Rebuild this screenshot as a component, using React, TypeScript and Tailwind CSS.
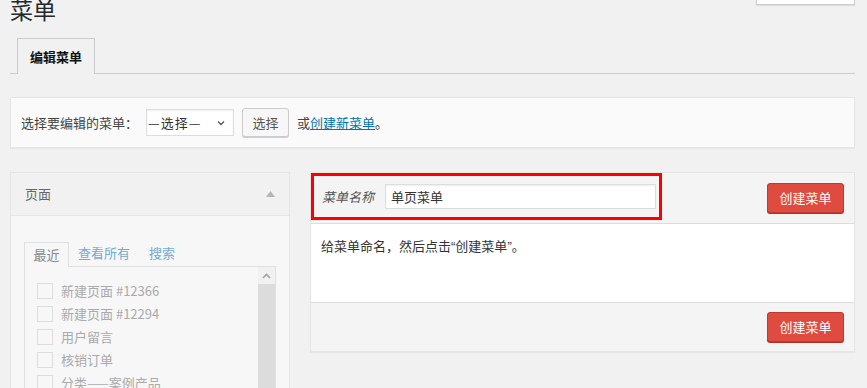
import React from "react";

const FONT = { fontFamily: '"Noto Sans CJK SC", "Noto Sans", sans-serif' };

const recent = [
  "新建页面 #12366",
  "新建页面 #12294",
  "用户留言",
  "核销订单",
  "分类——案例产品",
];

function CreateButton() {
  return (
    <button className="h-[30px] w-[77px] rounded-[3px] border border-[#c0392b] bg-[#e04b3f] text-[13px] text-white shadow-[0_1px_0_#b03228]">
      创建菜单
    </button>
  );
}

export default function App() {
  return (
    <div
      style={FONT}
      className="h-[388px] overflow-hidden bg-[#f1f1f1] pl-[10px] pr-[12px] text-[13px] text-[#444]"
    >
      {/* title + screen options */}
      <div className="flex items-start justify-between">
        <h1 className="-mt-[6px] text-[23px] leading-[30px] text-[#23282d]">菜单</h1>
        <div className="h-[5px] w-[99px] border-x border-b border-[#ccc] bg-white shadow-[0_1px_1px_rgba(0,0,0,0.08)]" />
      </div>

      {/* tabs */}
      <div className="mt-[14px] flex border-b border-[#ccc] pl-[7px]">
        <div className="-mb-px flex h-[36px] w-[78px] items-center justify-center border border-b-0 border-[#ccc] bg-[#f1f1f1] text-[13px] font-bold text-[#111]">
          编辑菜单
        </div>
      </div>

      {/* select bar */}
      <div className="mt-[23px] flex h-[51px] items-center border border-[#e5e5e5] bg-[#fafafa] pl-[10px] shadow-[0_1px_1px_rgba(0,0,0,0.04)]">
        <span className="text-[#444]">选择要编辑的菜单：</span>
        <div className="ml-[8px] flex h-[27px] w-[88px] items-center justify-between border border-[#ddd] bg-white pl-[1px] pr-[8px] shadow-[inset_0_1px_2px_rgba(0,0,0,0.07)]">
          <span className="tracking-[1px] text-[#333]">—选择—</span>
          <svg width="8" height="6" viewBox="0 0 8 6" fill="none" stroke="#555" strokeWidth="1.3">
            <path d="M1 1.5 L4 4.5 L7 1.5" />
          </svg>
        </div>
        <button className="ml-[8px] h-[29px] w-[47px] rounded-[3px] border border-[#ccc] bg-[#f7f7f7] text-[#555] shadow-[0_1px_0_#ccc]">
          选择
        </button>
        <span className="ml-[8px] text-[#444]">
          或<span className="text-[#0073aa] underline">创建新菜单</span>。
        </span>
      </div>

      {/* columns */}
      <div className="mt-[24px] flex gap-[20px]">
        {/* left: pages */}
        <div className="w-[280px] shrink-0 border border-[#e5e5e5] bg-[#f7f7f7]">
          <div className="flex h-[43px] items-center justify-between border-b border-[#e5e5e5] bg-[#f1f1f1] pl-[14px] pr-[14px]">
            <span className="text-[#666]">页面</span>
            <svg width="9" height="6" viewBox="0 0 9 6">
              <path d="M0 6 L4.5 0 L9 6 Z" fill="#b4b4b4" />
            </svg>
          </div>
          <div className="px-[13px] pt-[26px]">
            <div className="flex items-end text-[13px]">
              <div className="-mb-px flex h-[25px] w-[45px] items-center justify-center border border-b-0 border-[#e0e0e0] bg-[#f7f7f7] text-[#888]">
                最近
              </div>
              <span className="ml-[9px] pb-[4px] text-[#72aad3]">查看所有</span>
              <span className="ml-[19px] pb-[4px] text-[#72aad3]">搜索</span>
            </div>
            <div className="flex h-[140px] border border-[#e0e0e0] bg-[#f7f7f7]">
              <div className="flex-1 pl-[12px] pt-[16px]">
                {recent.map((t) => (
                  <div key={t} className="flex h-[23px] items-start gap-[8px]">
                    <span className="h-[16px] w-[16px] border border-[#ddd] bg-[#f7f7f7]" />
                    <span className="-mt-[2px] text-[#aaa]">{t}</span>
                  </div>
                ))}
              </div>
              <div className="flex w-[17px] flex-col">
                <div className="flex h-[17px] items-center justify-center bg-[#f1f1f1]">
                  <svg width="9" height="6" viewBox="0 0 9 6" fill="none" stroke="#a3a3a3" strokeWidth="1.6">
                    <path d="M1 5 L4.5 1.5 L8 5" />
                  </svg>
                </div>
                <div className="flex-1 bg-[#dcdcdc]" />
              </div>
            </div>
          </div>
        </div>

        {/* right: menu editor */}
        <div className="flex h-[180px] flex-1 flex-col border border-[#e5e5e5] shadow-[0_1px_1px_rgba(0,0,0,0.04)]">
          <div className="flex h-[51px] items-start justify-between border-b border-[#ddd] bg-[#f4f4f4] pr-[10px]">
            <div className="flex h-[47px] w-[351px] items-center border-[3px] border-[#ff0000] pl-[8px] pr-[3px]">
              <span className="italic text-[#555]">菜单名称</span>
              <div className="ml-[11px] flex h-[25px] flex-1 items-center border border-[#ddd] bg-white pl-[5px] text-[#333] shadow-[inset_0_1px_2px_rgba(0,0,0,0.07)]">
                单页菜单
              </div>
            </div>
            <div className="pt-[10px]">
              <CreateButton />
            </div>
          </div>
          <div className="h-[78px] bg-white pl-[10px] pt-[12px] text-[#333]">
            给菜单命名，然后点击<span style={{ fontFamily: '"Liberation Sans", sans-serif' }}>“</span>创建菜单<span style={{ fontFamily: '"Liberation Sans", sans-serif' }}>”</span>。
          </div>
          <div className="flex flex-1 items-center justify-end border-t border-[#ddd] bg-[#f4f4f4] pr-[10px]">
            <CreateButton />
          </div>
        </div>
      </div>
    </div>
  );
}
